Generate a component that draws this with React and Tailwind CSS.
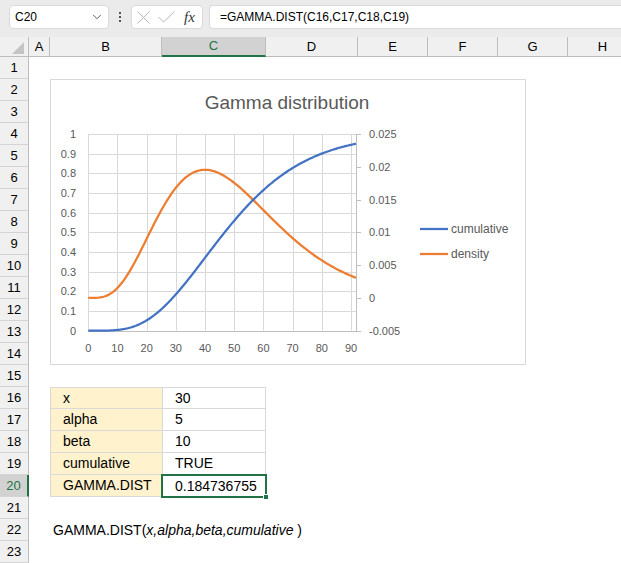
import React from "react";
import { ChevronDown } from "lucide-react";

const COLS = [
  ["A", "w-[21px]"],
  ["B", "w-[112px]"],
  ["C", "w-[104px]"],
  ["D", "w-[92px]"],
  ["E", "w-[70px]"],
  ["F", "w-[70px]"],
  ["G", "w-[70px]"],
  ["H", "w-[70px]"],
];

const ROWS = Array.from({ length: 23 }, (_, i) => i + 1);

const TABLE = [
  ["x", "30"],
  ["alpha", "5"],
  ["beta", "10"],
  ["cumulative", "TRUE"],
  ["GAMMA.DIST", "0.184736755"],
];

// chart geometry (local to the chart box)
const X0 = 38.3;
const XS = (301 - 38.3) / 90;
const XMAX = (306 - X0) / XS;
const YB = 251.7;
const YH = 196.7;
const px = (v) => X0 + v * XS;
const pyL = (v) => YB - v * YH;
const pyR = (d) => YB - ((d + 0.005) / 0.03) * YH;

const cdf = (x) => {
  const t = x / 10;
  let s = 0;
  let term = 1;
  for (let k = 0; k < 5; k++) {
    s += term;
    term *= t / (k + 1);
  }
  return 1 - Math.exp(-t) * s;
};
const pdf = (x) => (Math.pow(x, 4) * Math.exp(-x / 10)) / (24 * 1e5);

const buildPath = (fn, map) => {
  const pts = [];
  for (let x = 0; x < XMAX; x += 0.5) pts.push([px(x), map(fn(x))]);
  pts.push([px(XMAX), map(fn(XMAX))]);
  return pts.map((p, i) => `${i ? "L" : "M"}${p[0].toFixed(2)},${p[1].toFixed(2)}`).join(" ");
};

const Chart = () => {
  const vLines = [0, 10, 20, 30, 40, 50, 60, 70, 80, 90];
  const hLines = [0, 0.1, 0.2, 0.3, 0.4, 0.5, 0.6, 0.7, 0.8, 0.9, 1];
  const rTicks = [-0.005, 0, 0.005, 0.01, 0.015, 0.02, 0.025];
  const rLabel = ["-0.005", "0", "0.005", "0.01", "0.015", "0.02", "0.025"];
  return (
    <div className="ml-[21px] w-[476px] h-[286px] border border-[#d9d9d9] bg-white shrink-0">
      <svg width="474" height="284" className="block overflow-visible">
        <g transform="translate(-1,-1)">
          <text x="237" y="30" textAnchor="middle" fontSize="19" fill="#595959">
            Gamma distribution
          </text>
          {hLines.map((v) => (
            <line key={"h" + v} x1={X0} x2="306" y1={Math.round(pyL(v)) + 0.5} y2={Math.round(pyL(v)) + 0.5} stroke="#d9d9d9" />
          ))}
          {vLines.map((v) => (
            <line key={"v" + v} x1={Math.round(px(v)) + 0.5} x2={Math.round(px(v)) + 0.5} y1="55" y2={YB} stroke="#d9d9d9" />
          ))}
          <line x1={X0} x2="306" y1={Math.round(YB) + 0.5} y2={Math.round(YB) + 0.5} stroke="#bfbfbf" />
          <line x1="306.5" x2="306.5" y1="55" y2={YB + 0.5} stroke="#bfbfbf" />
          {rTicks.map((d, i) => (
            <g key={"r" + i}>
              <line x1="306" x2="311" y1={Math.round(pyR(d)) + 0.5} y2={Math.round(pyR(d)) + 0.5} stroke="#bfbfbf" />
              <text x="319" y={pyR(d) + 4} fontSize="11" fill="#595959">
                {rLabel[i]}
              </text>
            </g>
          ))}
          {hLines.map((v, i) => (
            <text key={"l" + i} x="26" y={pyL(v) + 4} textAnchor="end" fontSize="11" fill="#595959">
              {i === 10 ? "1" : i === 0 ? "0" : "0." + i}
            </text>
          ))}
          {vLines.map((v) => (
            <text key={"x" + v} x={px(v)} y="273" textAnchor="middle" fontSize="11" fill="#595959">
              {v}
            </text>
          ))}
          <path d={buildPath(pdf, pyR)} fill="none" stroke="#ed7d31" strokeWidth="2.25" strokeLinejoin="round" />
          <path d={buildPath(cdf, pyL)} fill="none" stroke="#4472c4" strokeWidth="2.25" strokeLinejoin="round" />
          <line x1="370" x2="398" y1="150" y2="150" stroke="#4472c4" strokeWidth="2.25" />
          <text x="401" y="154" fontSize="12" fill="#595959">cumulative</text>
          <line x1="370" x2="398" y1="175" y2="175" stroke="#ed7d31" strokeWidth="2.25" />
          <text x="401" y="179" fontSize="12" fill="#595959">density</text>
        </g>
      </svg>
    </div>
  );
};

const TopBar = () => (
  <div className="h-[37px] bg-[#ebebeb] flex items-start pt-[5px] pl-[9px] text-[12px] text-black">
    <div className="w-[100px] h-[24px] bg-white rounded-[4px] border border-[#dadada] flex items-center justify-between pl-[5px] pr-[4px]">
      <span>C20</span>
      <ChevronDown size={14} strokeWidth={1.5} color="#444" />
    </div>
    <div className="w-[22px] h-[24px] flex flex-col items-center justify-center gap-[2px]">
      <span className="w-[2px] h-[2px] bg-[#555]" />
      <span className="w-[2px] h-[2px] bg-[#555]" />
      <span className="w-[2px] h-[2px] bg-[#555]" />
    </div>
    <div className="w-[72px] h-[24px] bg-white rounded-[4px] border border-[#dadada] flex items-center pl-[5px]">
      <svg width="13" height="13" className="block">
        <path d="M0.5 0.5 L12.5 12.5 M12.5 0.5 L0.5 12.5" stroke="#b8b8b8" strokeWidth="1" />
      </svg>
      <svg width="17" height="12" className="block ml-[8px]">
        <path d="M0.5 6 L5.5 11 L16.5 0.5" fill="none" stroke="#b8b8b8" strokeWidth="1" />
      </svg>
      <span className="ml-[9px] font-['Liberation_Serif',serif] italic text-[15px] text-[#333] leading-none">fx</span>
    </div>
    <div className="ml-[6px] flex-1 h-[24px] bg-white rounded-l-[4px] border border-r-0 border-[#dadada] flex items-center pl-[10px]">
      =GAMMA.DIST(C16,C17,C18,C19)
    </div>
  </div>
);

const HeaderRow = () => (
  <div className="h-[20px] flex bg-[#f0f0f0] text-[13px] text-black">
    <div className="w-[29px] shrink-0 h-full border-b border-r border-[#bdbdbd] flex items-end justify-end pr-[4px] pb-[2px]">
      <svg width="12" height="12" className="block">
        <path d="M12 0 L12 12 L0 12 Z" fill="#c4c4c4" />
      </svg>
    </div>
    {COLS.map(([id, w]) =>
      id === "C" ? (
        <div key={id} className={`${w} shrink-0 h-full bg-[#d2d2d2] text-[#217346] border-r border-r-[#bdbdbd] border-b-2 border-b-[#217346] flex items-center justify-center`}>
          {id}
        </div>
      ) : (
        <div key={id} className={`${w} shrink-0 h-full border-r border-b border-[#bdbdbd] flex items-center justify-center`}>
          {id}
        </div>
      )
    )}
  </div>
);

const RowHeaders = () => (
  <div className="w-[29px] shrink-0 flex flex-col bg-[#f0f0f0] text-[13px] text-black">
    {ROWS.map((n) =>
      n === 20 ? (
        <div key={n} className="h-[22px] shrink-0 bg-[#d2d2d2] text-[#217346] border-b border-b-[#d4d4d4] border-r-2 border-r-[#217346] flex items-center justify-center">
          {n}
        </div>
      ) : (
        <div key={n} className="h-[22px] shrink-0 border-b border-b-[#d4d4d4] border-r border-r-[#bdbdbd] flex items-center justify-center">
          {n}
        </div>
      )
    )}
  </div>
);

const Table = () => (
  <div className="ml-[21px] flex flex-col text-[14px] text-black">
    {TABLE.map(([label, value], i) => (
      <div key={label} className="flex h-[22px]">
        <div className={`w-[112px] h-full bg-[#fff2cc] border-l border-b border-[#d9d9d9] flex items-center pl-[12px] ${i === 0 ? "border-t" : ""}`}>
          {label}
        </div>
        {i === 4 ? (
          <div className="relative w-[104px] h-full flex items-center pl-[13px]">
            {value}
            <div className="absolute -left-[1px] -top-[1px] w-[106px] h-[24px] border-2 border-[#217346]" />
            <div className="absolute right-[-3px] bottom-[-3px] w-[6px] h-[6px] bg-[#217346] border border-white" />
          </div>
        ) : (
          <div className={`w-[104px] h-full border-l border-r border-b border-[#d9d9d9] flex items-center pl-[12px] ${i === 0 ? "border-t" : ""}`}>
            {value}
          </div>
        )}
      </div>
    ))}
  </div>
);

export default function App() {
  return (
    <div className="w-[621px] h-[563px] overflow-hidden bg-white font-['Liberation_Sans',Arial,sans-serif]">
      <TopBar />
      <HeaderRow />
      <div className="flex">
        <RowHeaders />
        <div className="flex-1 flex flex-col">
          <div className="h-[22px]" />
          <Chart />
          <div className="h-[22px]" />
          <Table />
          <div className="h-[22px]" />
          <div className="h-[22px] flex items-center pl-[24px] text-[14px] text-black whitespace-pre">
            GAMMA.DIST(<span className="italic">x,alpha,beta,cumulative</span> )
          </div>
          <div className="h-[22px]" />
        </div>
      </div>
    </div>
  );
}
